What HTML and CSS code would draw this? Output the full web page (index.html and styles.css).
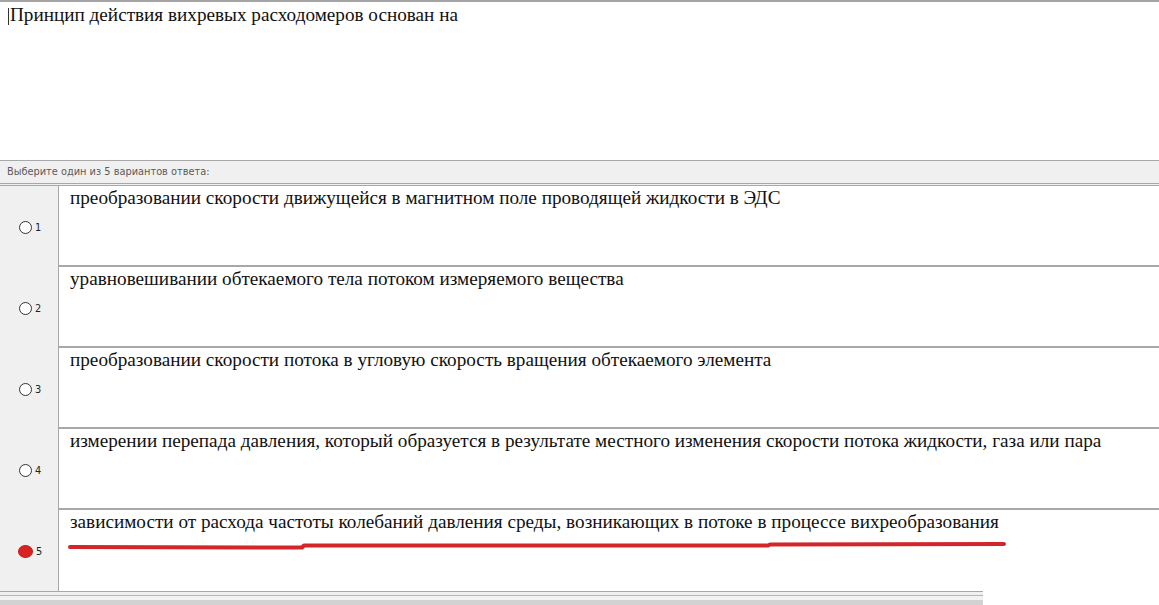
FILE: index.html
```html
<!DOCTYPE html>
<html>
<head>
    <title>Тест</title>
    <link rel="stylesheet" href="styles.css">
</head>
<body>
    <div class="question"><span class="caret"></span>Принцип действия вихревых расходомеров основан на</div>

    <div class="hint">Выберите один из 5 вариантов ответа:</div>

    <div class="answers">
        <div class="answer">
            <div class="num"><span class="radio"></span><span class="label">1</span></div>
            <div class="text">преобразовании скорости движущейся в магнитном поле проводящей жидкости в ЭДС</div>
        </div>
        <div class="answer">
            <div class="num"><span class="radio"></span><span class="label">2</span></div>
            <div class="text">уравновешивании обтекаемого тела потоком измеряемого вещества</div>
        </div>
        <div class="answer">
            <div class="num"><span class="radio"></span><span class="label">3</span></div>
            <div class="text">преобразовании скорости потока в угловую скорость вращения обтекаемого элемента</div>
        </div>
        <div class="answer">
            <div class="num"><span class="radio"></span><span class="label">4</span></div>
            <div class="text">измерении перепада давления, который образуется в результате местного изменения скорости потока жидкости, газа или пара</div>
        </div>
        <div class="answer last">
            <div class="num"><span class="radio checked"></span><span class="label">5</span></div>
            <div class="text">зависимости от расхода частоты колебаний давления среды, возникающих в потоке в процессе вихреобразования
                <!-- red marker stroke under the chosen answer -->
                <svg class="marker" width="960" height="12" viewBox="0 0 960 12">
                    <polyline points="2,7 234,7.5 236,5.5 700,5.5 702,4.5 936,4" fill="none" stroke="#d3262b" stroke-width="4" stroke-linecap="round" stroke-linejoin="round"/>
                </svg>
            </div>
        </div>
    </div>

    <div class="footer"><div class="bar"></div></div>
</body>
</html>
```

FILE: styles.css
```css
body { margin: 0; background: #fff; font-family: "Liberation Serif", "Times New Roman", serif; }

.question { border-top: 2px solid #a3a3a3; height: 157px; padding: 1px 8px 0 8px; font-size: 19.2px; line-height: 24px; color: #111; }
.caret { display: inline-block; width: 1px; height: 17px; background: #333; vertical-align: -4px; margin-right: 1px; }

.hint { border-top: 1px solid #a8a8a8; border-bottom: 3px double #a8a8a8; background: #f0f0f0; height: 22px; line-height: 22px; padding-left: 7px; font-family: "DejaVu Sans", sans-serif; font-size: 9.8px; color: #5a5a5a; }

.answer { display: flex; height: 81px; }
.num { width: 59px; flex: none; background: #f0f0f0; border-right: 1px solid #a8a8a8; display: flex; align-items: center; padding-left: 19px; box-sizing: border-box; padding-top: 1px; }
.radio { width: 11px; height: 11px; border: 1px solid #333; border-radius: 50%; background: #fff; }
.radio.checked { background: #d92222; border-color: #c81c1c; width: 13px; height: 11px; margin-left: -1px; }
.label { margin-left: 3px; font-family: "DejaVu Sans", sans-serif; font-size: 9.8px; color: #222; padding-top: 1px; }

.text { flex: 1; position: relative; border-bottom: 2px solid #a8a8a8; padding: 0 11px; font-size: 19.2px; line-height: 24px; color: #111; }
.answer.last .text { border-bottom: none; }
.marker { position: absolute; left: 9px; top: 30px; }

.footer { width: 983px; border-top: 1px solid #a8a8a8; background: #f0f0f0; padding-top: 3px; height: 12px; }
.bar { border-top: 1px solid #b5b5b5; height: 11px; background: linear-gradient(#f2f2f2 0, #f2f2f2 4px, #d2d2d2 4px); }
```
